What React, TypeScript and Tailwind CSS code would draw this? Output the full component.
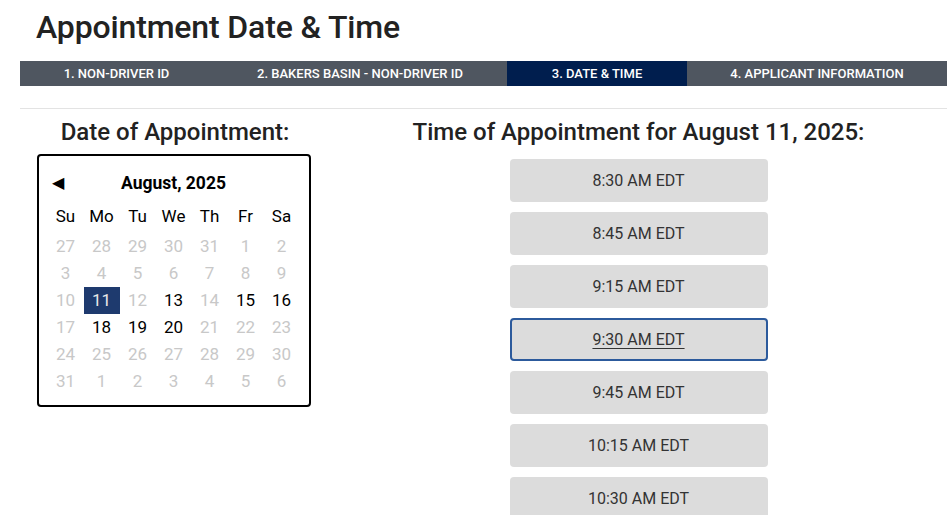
import React from "react";

const steps = [
  { label: "1. NON-DRIVER ID", w: "w-[193px]", active: false },
  { label: "2. BAKERS BASIN - NON-DRIVER ID", w: "w-[294px]", active: false },
  { label: "3. DATE & TIME", w: "w-[180px]", active: true },
  { label: "4. APPLICANT INFORMATION", w: "flex-1", active: false },
];

type Day = { n: number; on: boolean; sel?: boolean };

const weeks: Day[][] = [
  [27, 28, 29, 30, 31, 1, 2].map((n) => ({ n, on: false })),
  [3, 4, 5, 6, 7, 8, 9].map((n) => ({ n, on: false })),
  [
    { n: 10, on: false },
    { n: 11, on: true, sel: true },
    { n: 12, on: false },
    { n: 13, on: true },
    { n: 14, on: false },
    { n: 15, on: true },
    { n: 16, on: true },
  ],
  [
    { n: 17, on: false },
    { n: 18, on: true },
    { n: 19, on: true },
    { n: 20, on: true },
    { n: 21, on: false },
    { n: 22, on: false },
    { n: 23, on: false },
  ],
  [24, 25, 26, 27, 28, 29, 30].map((n) => ({ n, on: false })),
  [31, 1, 2, 3, 4, 5, 6].map((n) => ({ n, on: false })),
];

const times = [
  "8:30 AM EDT",
  "8:45 AM EDT",
  "9:15 AM EDT",
  "9:30 AM EDT",
  "9:45 AM EDT",
  "10:15 AM EDT",
  "10:30 AM EDT",
];

export default function App() {
  return (
    <div
      className="w-[947px] h-[515px] overflow-hidden bg-white"
      style={{ fontFamily: "Roboto, 'Liberation Sans', sans-serif" }}
    >
      <div className="pl-[36px] pt-[7px] h-[61px]">
        <h1 className="text-[32px] leading-[40px] font-medium text-[#222] tracking-[-0.15px]">
          Appointment Date &amp; Time
        </h1>
      </div>
      <div className="ml-[20px] flex h-[25px] bg-[#4f5660]">
        {steps.map((s) => (
          <div
            key={s.label}
            className={`${s.w} flex items-center justify-center text-[13px] font-medium text-white ${
              s.active ? "bg-[#001e4e]" : ""
            }`}
          >
            {s.label}
          </div>
        ))}
      </div>
      <div className="ml-[20px] mt-[22px] h-px bg-[#e3e3e3]" />
      <div className="flex pt-[8px] ml-[20px]">
        <div className="w-[310px] flex flex-col items-center">
          <h2 className="text-[24px] leading-[30px] font-medium text-[#222]">
            Date of Appointment:
          </h2>
          <div className="mt-[7px] mr-[3px] w-[274px] border-2 border-black rounded-[4px] px-[9px] pt-[12px] pb-[10px]">
            <div className="relative h-[30px] flex items-center justify-center">
              <span className="absolute left-[4px] top-[7px] text-[16px] leading-[16px] text-black">
                ◀
              </span>
              <span className="text-[17.5px] font-bold text-black">August, 2025</span>
            </div>
            <div className="mt-[5px] grid grid-cols-7 h-[27px]">
              {["Su", "Mo", "Tu", "We", "Th", "Fr", "Sa"].map((d) => (
                <div key={d} className="flex items-center justify-center text-[17px] text-black">
                  {d}
                </div>
              ))}
            </div>
            <div className="mt-[3px]">
              {weeks.map((w, i) => (
                <div key={i} className="grid grid-cols-7 h-[27px]">
                  {w.map((d, j) => (
                    <div
                      key={j}
                      className={`flex items-center justify-center text-[17px] ${
                        d.sel
                          ? "bg-[#1e3a6e] text-[#e8e8e8]"
                          : d.on
                          ? "text-black"
                          : "text-[#c8c8c8]"
                      }`}
                    >
                      {d.n}
                    </div>
                  ))}
                </div>
              ))}
            </div>
          </div>
        </div>
        <div className="flex-1 flex flex-col items-center">
          <h2 className="text-[24px] leading-[30px] font-medium text-[#222]">
            Time of Appointment for August 11, 2025:
          </h2>
          <div className="mt-[12px] flex flex-col gap-[10px]">
            {times.map((t, i) => (
              <div
                key={t}
                className={`w-[258px] h-[43px] rounded-[4px] bg-[#dcdcdc] flex items-center justify-center text-[16px] text-[#333] ${
                  i === 3 ? "border-2 border-[#2c5a9c] underline underline-offset-[3px]" : ""
                }`}
              >
                {t}
              </div>
            ))}
          </div>
        </div>
      </div>
    </div>
  );
}
